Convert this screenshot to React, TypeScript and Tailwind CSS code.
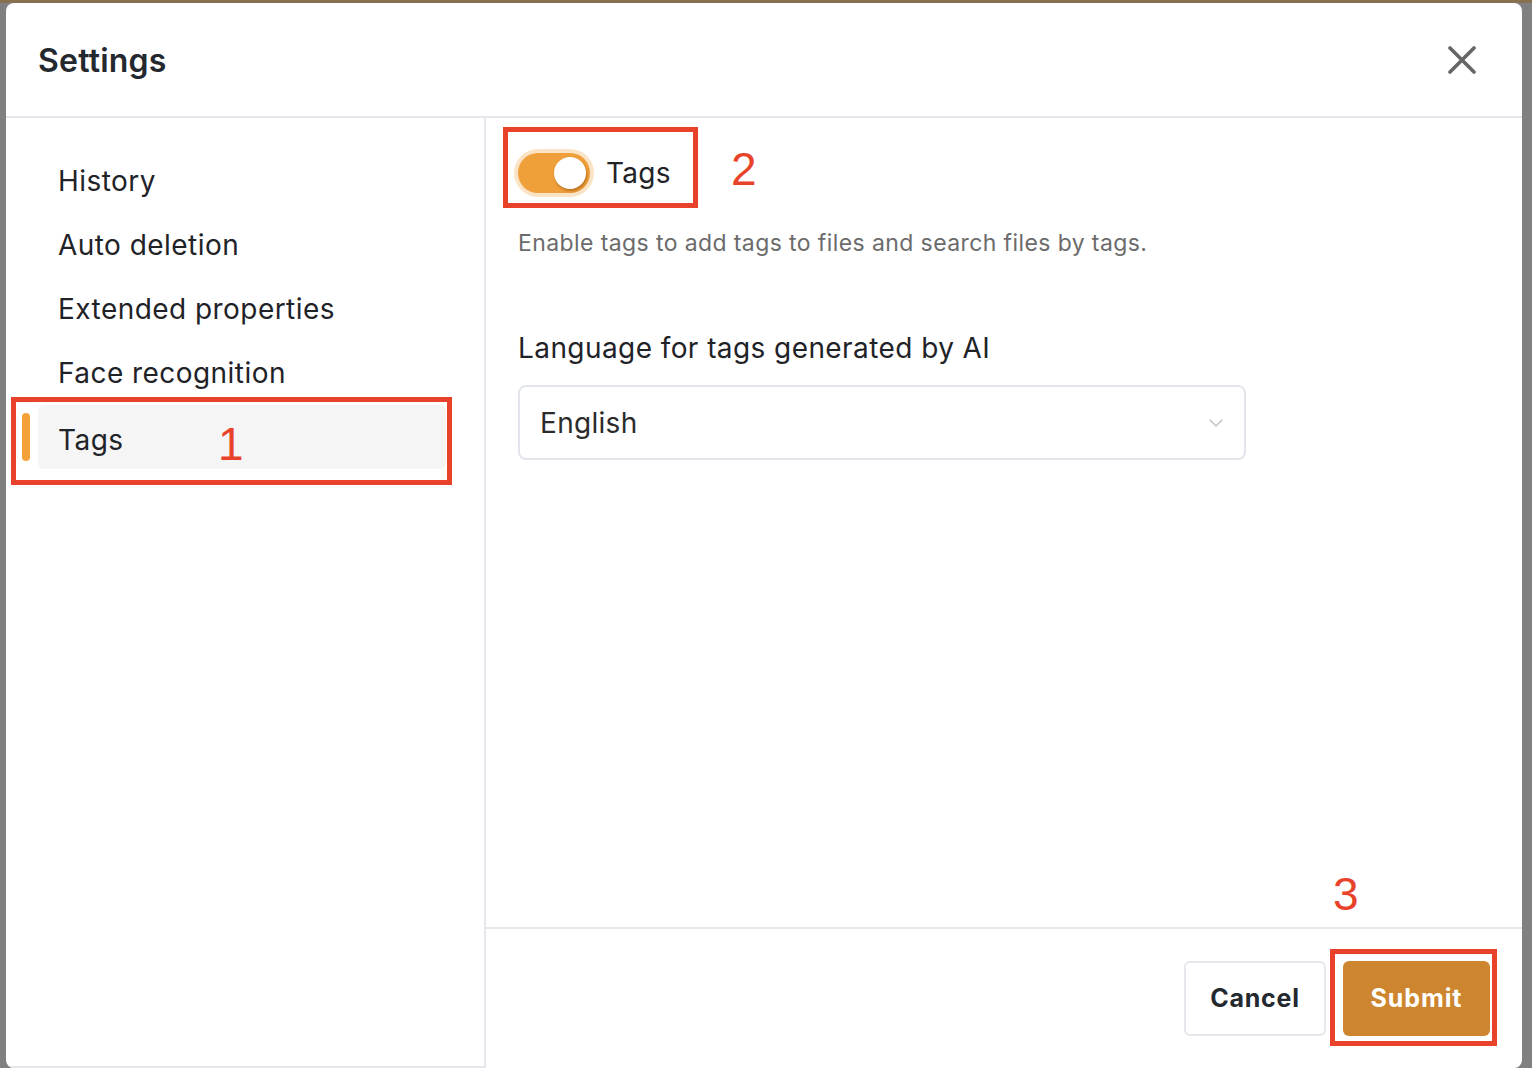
import { ChevronDown } from "lucide-react";

const NAV = ["History", "Auto deletion", "Extended properties", "Face recognition", "Tags"];

function Toggle({ on }: { on: boolean }) {
  return (
    <span className="flex h-[48px] w-[80px] items-center justify-center rounded-full bg-[#fbe4c6]">
      <span
        className={`flex h-[40px] w-[72px] items-center rounded-full p-[4px] ${on ? "justify-end bg-[#f0a03a]" : "justify-start bg-gray-300"}`}
      >
        <span className="h-[32px] w-[32px] rounded-full bg-white shadow-[1px_2px_3px_rgba(120,60,0,0.45)]" />
      </span>
    </span>
  );
}

function Marker({ className }: { className: string }) {
  return <div className={`pointer-events-none absolute border-[5px] border-[#e8432a] ${className}`} />;
}

function Num({ n, className }: { n: string; className: string }) {
  return (
    <div
      className={`pointer-events-none absolute text-[46px] leading-none text-[#e8432a] ${className}`}
      style={{ fontFamily: '"Liberation Sans", Arial, sans-serif' }}
    >
      {n}
    </div>
  );
}

export default function App() {
  const active = "Tags";
  return (
    <div
      className="relative h-[1068px] w-full overflow-hidden bg-[#808080]"
      style={{ fontFamily: 'Inter, "Noto Sans", sans-serif' }}
    >
      <div className="h-[3px] bg-[#85704f]" />
      <div className="ml-[6px] flex h-[1065px] w-[1516px] flex-col overflow-hidden rounded-[8px] bg-white">
        <header className="flex h-[115px] shrink-0 items-center justify-between border-b-2 border-[#e4e7ec] pr-[46px] pl-[32px]">
          <h1 className="pt-[2px] text-[32px] font-semibold tracking-[0.2px] text-[#24292f]">Settings</h1>
          <button className="text-[#666666]">
            <svg width="28" height="28" viewBox="0 0 28 28" fill="none" stroke="currentColor" strokeWidth="3.6" strokeLinecap="round">
              <path d="M2 2 26 26M26 2 2 26" />
            </svg>
          </button>
        </header>

        <div className="flex min-h-0 flex-1">
          <nav className="flex w-[480px] shrink-0 flex-col border-r-2 border-b-2 border-[#e4e7ec] pt-[31px] pr-[38px] pl-[32px]">
            {NAV.map((item) => (
              <div
                key={item}
                className={`relative flex h-[64px] items-center rounded-[6px] px-[20px] text-[28px] tracking-[0.45px] text-[#1f2328] ${item === active ? "bg-[#f5f5f5] pt-[6px]" : ""}`}
              >
                {item === active && (
                  <span className="absolute top-[8px] left-[-16px] h-[48px] w-[8px] rounded-full bg-[#f4a13a]" />
                )}
                {item}
              </div>
            ))}
          </nav>

          <section className="flex min-w-0 flex-1 flex-col">
            <div className="flex-1 pt-[31px] pl-[28px]">
              <div className="flex items-center gap-[12px]">
                <Toggle on />
                <span className="text-[28px] tracking-[0.3px] text-[#1f2328]">Tags</span>
              </div>
              <p className="mt-[31px] pl-[4px] text-[23px] leading-[30px] tracking-[0.4px] text-[#6b6b6b]">
                Enable tags to add tags to files and search files by tags.
              </p>
              <p className="mt-[72px] pl-[4px] text-[28px] leading-[36px] tracking-[0.42px] text-[#1f2328]">
                Language for tags generated by AI
              </p>
              <div className="mt-[19px] ml-[4px] flex h-[75px] w-[728px] items-center justify-between rounded-[8px] border-2 border-[#e2e6ec] pr-[16px] pl-[20px]">
                <span className="text-[28px] tracking-[0.3px] text-[#2b2b2b]">English</span>
                <ChevronDown size={24} strokeWidth={1.5} className="text-[#c4c4c4]" />
              </div>
            </div>
            <footer className="flex h-[141px] shrink-0 items-start justify-end gap-[17px] border-t-2 border-[#e4e7ec] pt-[32px] pr-[32px]">
              <button className="h-[75px] w-[142px] rounded-[6px] border-2 border-[#e4e7ec] bg-white text-[25px] font-bold tracking-[0.8px] text-[#24292f]">
                Cancel
              </button>
              <button className="h-[75px] w-[147px] rounded-[6px] bg-[#cd862f] text-[25px] font-bold tracking-[0.9px] text-white">
                Submit
              </button>
            </footer>
          </section>
        </div>
      </div>

      <Marker className="top-[397px] left-[11px] h-[88px] w-[441px]" />
      <Marker className="top-[127px] left-[503px] h-[81px] w-[195px]" />
      <Marker className="top-[949px] left-[1330px] h-[97px] w-[167px]" />
      <Num n="1" className="top-[421px] left-[218px]" />
      <Num n="2" className="top-[146px] left-[731px]" />
      <Num n="3" className="top-[871px] left-[1333px]" />
    </div>
  );
}
